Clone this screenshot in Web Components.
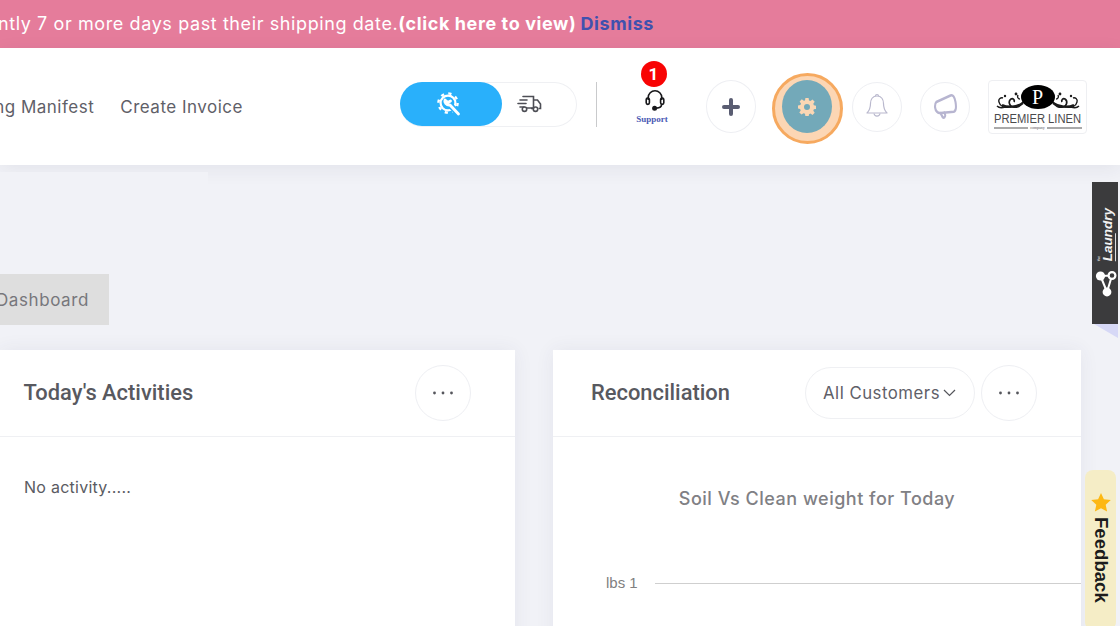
<!DOCTYPE html>
<html>
<head>
<meta charset="utf-8">
<style>
  html, body { margin: 0; height: 100%; }
  body {
    width: 1120px;
    height: 626px;
    overflow: hidden;
    position: relative;
    background: #f1f2f7;
    font-family: "Inter", "Liberation Sans", sans-serif;
  }
</style>
</head>
<body>
<app-banner>
  <span>You have orders that are currently 7 or more days past their shipping date.</span><b>(click here to view)</b>
  <a slot="action">Dismiss</a>
</app-banner>
<app-header>
  <app-nav-link>Receiving Manifest</app-nav-link>
  <app-nav-link>Create Invoice</app-nav-link>
</app-header>
<app-main></app-main>
<app-laundry-tab></app-laundry-tab>
<app-feedback-tab></app-feedback-tab>

<script>
class Banner extends HTMLElement {
  constructor() {
    super();
    this.attachShadow({ mode: "open" });
  }

  connectedCallback() {
    this.shadowRoot.innerHTML = `
      <style>
        :host {
          display: flex;
          justify-content: flex-end;
          align-items: center;
          box-sizing: border-box;
          height: 48px;
          padding: 0 466px 2px 0;
          overflow: hidden;
          background: #e57c9b;
          color: #fff;
          font-size: 18px;
          letter-spacing: 0.6px;
          white-space: nowrap;
        }
        .action {
          flex: none;
          margin-left: 4px;
          color: #3f51ae;
          font-weight: 700;
        }
        .text { flex: none; }
      </style>
      <span class="text"><slot></slot></span>
      <span class="action"><slot name="action"></slot></span>
    `;
  }
}

class NavLink extends HTMLElement {
  constructor() {
    super();
    this.attachShadow({ mode: "open" });
  }

  connectedCallback() {
    this.shadowRoot.innerHTML = `
      <style>
        :host {
          display: block;
          flex: none;
          color: #5f6068;
          font-size: 17px;
          letter-spacing: 0.5px;
          white-space: nowrap;
        }
      </style>
      <slot></slot>
    `;
  }
}

class ModeToggle extends HTMLElement {
  constructor() {
    super();
    this.attachShadow({ mode: "open" });
  }

  connectedCallback() {
    this.shadowRoot.innerHTML = `
      <style>
        :host {
          display: flex;
          flex: none;
          width: 177px;
          height: 45px;
          margin-bottom: 5px;
          box-sizing: border-box;
          border: 1px solid #eff0f3;
          border-left: 0;
          border-radius: 23px;
        }
        .on {
          display: flex;
          align-items: center;
          justify-content: center;
          width: 102px;
          height: 44px;
          margin-top: -1px;
          border-radius: 22px;
          background: #29b0fb;
        }
        .on svg { margin-right: 4px; }
        .off {
          display: flex;
          flex: 1;
          align-items: center;
          justify-content: center;
          padding-right: 20px;
        }
      </style>
      <div class="on">
        <svg width="26" height="26" viewBox="0 0 26 26" fill="none" stroke="#fff">
          <circle cx="12" cy="12" r="9.600" stroke-width="2.400" stroke-dasharray="3.200 4.340"/>
          <circle cx="12" cy="12" r="7.400" stroke-width="2.200"/>
          <path d="M15 15l8 8.500" stroke="#29b0fb" stroke-width="6"/>
          <path d="M9 9c-1 2.500 1.500 5.500 5 5l8.500 9M9 9l3 2.500 2.500-1.500" stroke-width="2.800" stroke-linecap="round" stroke-linejoin="round"/>
        </svg>
      </div>
      <div class="off">
        <svg width="25" height="18" viewBox="0 0 25 18" fill="none" stroke="#4d4e55" stroke-width="1.600">
          <path d="M6 1.500h10.500v11.500H10M3 5h7M1 8.500h8M3 12h4" stroke-linecap="round"/>
          <path d="M16.500 5h4l3 4v4.500h-2M16.500 13.500H14"/>
          <circle cx="7.500" cy="14.200" r="2.200"/>
          <circle cx="18.500" cy="14.200" r="2.200"/>
        </svg>
      </div>
    `;
  }
}

class SupportLink extends HTMLElement {
  constructor() {
    super();
    this.attachShadow({ mode: "open" });
  }

  connectedCallback() {
    this.shadowRoot.innerHTML = `
      <style>
        :host {
          display: flex;
          flex: none;
          flex-direction: column;
          align-items: center;
          width: 60px;
          margin-bottom: 27px;
        }
        .badge {
          display: flex;
          align-items: center;
          justify-content: center;
          width: 26px;
          height: 26px;
          margin-left: 3px;
          border-radius: 50%;
          background: #f80404;
          color: #fff;
          font: 700 17px "Roboto", sans-serif;
        }
        svg { display: block; margin: 3px 0 0 5px; }
        .label {
          margin-top: 2px;
          color: #4a5ab4;
          font: 700 9px/11px "Liberation Serif", serif;
        }
      </style>
      <div class="badge">1</div>
      <svg width="20" height="22" viewBox="0 0 20 22" fill="none" stroke="#17171a" stroke-width="1.600">
        <path d="M3.200 10V7.600a6.800 6.800 0 0 1 13.600 0V10"/>
        <rect x="1.200" y="8" width="3.200" height="6.400" rx="1.600"/>
        <rect x="15.600" y="8" width="3.200" height="6.400" rx="1.600"/>
        <path d="M16.500 14.500c0 2.600-2 3.600-5 3.600"/>
        <circle cx="9.600" cy="18.200" r="1.700" fill="#17171a"/>
      </svg>
      <div class="label">Support</div>
    `;
  }
}

class RoundButton extends HTMLElement {
  constructor() {
    super();
    this.attachShadow({ mode: "open" });
  }

  connectedCallback() {
    const size = this.getAttribute("size") || "50";
    const height = this.getAttribute("height") || size;
    this.shadowRoot.innerHTML = `
      <style>
        :host {
          display: flex;
          flex: none;
          align-items: center;
          justify-content: center;
          box-sizing: border-box;
          width: ${size}px;
          height: ${height}px;
          border: 1px solid #eeeff3;
          border-radius: 50%;
          background: #fff;
        }
        ::slotted(svg) { display: block; }
      </style>
      <slot></slot>
    `;
  }
}

class GearButton extends HTMLElement {
  constructor() {
    super();
    this.attachShadow({ mode: "open" });
  }

  connectedCallback() {
    this.shadowRoot.innerHTML = `
      <style>
        :host {
          display: flex;
          flex: none;
          align-items: center;
          justify-content: center;
          box-sizing: border-box;
          width: 71px;
          height: 71px;
          margin-top: 4px;
          border: 3px solid #f6a95f;
          border-radius: 50%;
          background: #fcd6b4;
        }
        .inner {
          display: flex;
          align-items: center;
          justify-content: center;
          width: 50px;
          height: 53px;
          margin: 0 1px 4px 0;
          border-radius: 50%;
          background: #73a9b9;
        }
      </style>
      <div class="inner">
        <svg width="18" height="18" viewBox="0 0 18 18">
          <path fill="#fbd7b4" fill-rule="evenodd" d="M7.400 0h3.200l.4 2.400 1.500.6 2-1.400 2.200 2.200-1.400 2 .6 1.500 2.400.4v3.200l-2.400.4-.6 1.500 1.400 2-2.200 2.200-2-1.400-1.500.6-.4 2.400H7.400L7 15.800l-1.500-.6-2 1.400-2.200-2.200 1.400-2-.6-1.500L0 10.600V7.400L2.400 7l.6-1.500-1.400-2 2.200-2.200 2 1.400L7 2.400zM9 6a3 3 0 1 0 0 6 3 3 0 0 0 0-6z"/>
        </svg>
      </div>
    `;
  }
}

class CompanyLogo extends HTMLElement {
  constructor() {
    super();
    this.attachShadow({ mode: "open" });
  }

  connectedCallback() {
    const flourish = `
      <path d="M29 17c-2 4-6 6-10 5-4-1-5-6-2-8 2-1 4 1 3 3" stroke-width="1.700"/>
      <path d="M24 10c-1 2 0 4 2 4M15 22c-5 1-9-1-10-5-1-3 2-5 4-4M11 22c-3 1-6 1-8-1" stroke-width="1.400"/>
      <path d="M8 20c6 3 15 2 21-2" stroke-width="2.400"/>
      <circle cx="22" cy="9" r="1.400" fill="#1b1b1b" stroke="none"/>
      <circle cx="11" cy="11" r="1.200" fill="#1b1b1b" stroke="none"/>
    `;
    this.shadowRoot.innerHTML = `
      <style>
        :host {
          display: flex;
          flex: none;
          flex-direction: column;
          align-items: center;
          box-sizing: border-box;
          width: 99px;
          height: 54px;
          padding-top: 4px;
          border: 1px solid #eeeff2;
          border-radius: 4px;
          overflow: hidden;
        }
        .mark { position: relative; width: 88px; height: 27px; }
        svg { display: block; }
        .p {
          position: absolute;
          left: 0;
          right: 0;
          top: 0;
          color: #fff;
          text-align: center;
          font: 20px/24px "Liberation Serif", serif;
        }
        .name {
          color: #4a4a4c;
          font: 11.200px/13px "Liberation Sans", sans-serif;
          transform: scaleY(1.150);
          white-space: nowrap;
        }
        .rule {
          display: flex;
          align-items: center;
          gap: 2px;
          width: 88px;
          margin-top: 1px;
          color: #555;
          font: 4px/4px "Liberation Serif", serif;
        }
        .rule i { flex: 1; height: 2px; background: #a9a9a9; }
      </style>
      <div class="mark">
        <svg width="88" height="27" viewBox="0 0 88 27">
          <g fill="none" stroke="#1b1b1b">${flourish}</g>
          <g fill="none" stroke="#1b1b1b" transform="matrix(-1 0 0 1 88 0)">${flourish}</g>
          <ellipse cx="44" cy="12" rx="17" ry="12" fill="#000"/>
        </svg>
        <div class="p">P</div>
      </div>
      <div class="name">PREMIER LINEN</div>
      <div class="rule"><i></i>company<i></i></div>
    `;
  }
}

class Header extends HTMLElement {
  constructor() {
    super();
    this.attachShadow({ mode: "open" });
  }

  connectedCallback() {
    this.shadowRoot.innerHTML = `
      <style>
        :host {
          display: flex;
          align-items: center;
          position: relative;
          height: 117px;
          background: #fff;
          box-shadow: 0 4px 18px rgba(40, 40, 70, 0.07);
        }
        .nav {
          display: flex;
          flex: none;
          justify-content: flex-end;
          gap: 26px;
          width: 243px;
          overflow: hidden;
        }
        app-mode-toggle { margin-left: 157px; }
        .divider {
          flex: none;
          width: 1px;
          height: 45px;
          margin: 0 0 5px 19px;
          background: #c9cacc;
        }
        app-support-link { margin-left: 25px; }
        .plus { margin-left: 24px; }
        app-gear-button { margin-left: 16px; }
        .bell { margin-left: 9px; }
        .horn { margin-left: 18px; }
        app-company-logo { margin-left: 18px; }
      </style>
      <div class="nav"><slot></slot></div>
      <app-mode-toggle></app-mode-toggle>
      <div class="divider"></div>
      <app-support-link></app-support-link>
      <app-round-button class="plus" size="50" height="53">
        <svg width="18" height="18" viewBox="0 0 18 18"><path d="M9 2v14M2 9h14" stroke="#5a5d72" stroke-width="4" stroke-linecap="round"/></svg>
      </app-round-button>
      <app-gear-button></app-gear-button>
      <app-round-button class="bell" size="50">
        <svg width="24" height="28" viewBox="0 1 24 28" fill="none" stroke="#b9b8cd" stroke-width="1.200" stroke-linejoin="round">
          <path d="M12 4c-4.500 0-6.500 3.500-6.500 7.500 0 5-1.500 7.500-3.500 9.500h20c-2-2-3.500-4.500-3.500-9.500C18.500 7.500 16.500 4 12 4z"/>
          <path d="M10.500 4c0-2 3-2 3 0M9 21.500c.5 3.500 5.500 3.500 6 0"/>
        </svg>
      </app-round-button>
      <app-round-button class="horn" size="50">
        <svg width="25" height="27" viewBox="0 0 30 27" preserveAspectRatio="none" fill="none" stroke="#b7b5d0" stroke-width="2.500" stroke-linejoin="round" stroke-linecap="round">
          <path d="M4 9L21 2.500C24 1.500 26 4 27 9C28 14 28 18 25 18.700L9 20C6 20.500 3 18 2.500 14.500C2.300 12 2.800 10 4 9z"/>
          <path d="M9 20L11.500 24C13 25.500 15.500 24 14.500 21.500L13.500 19.600"/>
        </svg>
      </app-round-button>
      <app-company-logo></app-company-logo>
    `;
  }
}

class Card extends HTMLElement {
  constructor() {
    super();
    this.attachShadow({ mode: "open" });
  }

  connectedCallback() {
    this.shadowRoot.innerHTML = `
      <style>
        :host {
          display: block;
          background: #fff;
          box-shadow: 0 0 18px rgba(60, 60, 100, 0.07);
        }
        .head {
          display: flex;
          align-items: center;
          box-sizing: border-box;
          height: 87px;
          padding: 0 44px 1px var(--title-left, 23.500px);
          border-bottom: 1px solid #eff0f3;
        }
        .title {
          flex: 1;
          color: #58595f;
          font: 500 21.900px "Roboto", sans-serif;
        }
        .tools { display: flex; align-items: center; gap: 6px; }
      </style>
      <div class="head">
        <div class="title">${this.getAttribute("title") || ""}</div>
        <div class="tools">
          <slot name="tools"></slot>
          <app-round-button size="56">
            <svg width="22" height="4" viewBox="0 0 22 4" fill="#55565c"><circle cx="2.500" cy="2" r="1.400"/><circle cx="11" cy="2" r="1.400"/><circle cx="19.500" cy="2" r="1.400"/></svg>
          </app-round-button>
        </div>
      </div>
      <slot></slot>
    `;
  }
}

class SelectPill extends HTMLElement {
  constructor() {
    super();
    this.attachShadow({ mode: "open" });
  }

  connectedCallback() {
    this.shadowRoot.innerHTML = `
      <style>
        :host {
          display: flex;
          align-items: center;
          gap: 3px;
          box-sizing: border-box;
          width: 170px;
          height: 52px;
          padding-left: 17px;
          border: 1px solid #eff0f3;
          border-radius: 26px;
          color: #5f6068;
          font-size: 16.800px;
          letter-spacing: 0.5px;
          white-space: nowrap;
        }
      </style>
      <slot></slot>
      <svg width="13" height="8" viewBox="0 0 13 8" fill="none" stroke="#55565c" stroke-width="1.200"><path d="M1 1l5.500 5.500L12 1"/></svg>
    `;
  }
}

class WeightChart extends HTMLElement {
  constructor() {
    super();
    this.attachShadow({ mode: "open" });
  }

  connectedCallback() {
    this.shadowRoot.innerHTML = `
      <style>
        :host { display: block; padding-top: 49px; }
        .title {
          color: #808084;
          font-size: 18px;
          font-weight: 500;
          letter-spacing: 0.5px;
          line-height: 26px;
          text-align: center;
        }
        .axis {
          display: flex;
          align-items: center;
          gap: 17px;
          margin-top: 61px;
          padding-left: 53px;
        }
        .tick { color: #808080; font: 15px/20px "Liberation Sans", sans-serif; }
        .line { flex: 1; height: 1px; background: #cfcfcf; }
      </style>
      <div class="title">${this.getAttribute("title") || ""}</div>
      <div class="axis">
        <span class="tick">lbs 1</span>
        <span class="line"></span>
      </div>
    `;
  }
}

class Main extends HTMLElement {
  constructor() {
    super();
    this.attachShadow({ mode: "open" });
  }

  connectedCallback() {
    this.shadowRoot.innerHTML = `
      <style>
        :host { display: block; position: relative; }
        .strip { width: 208px; height: 14px; margin-top: 7px; background: #f1f2f7; position: relative; }
        .crumb {
          display: flex;
          justify-content: flex-end;
          align-items: center;
          box-sizing: border-box;
          width: 109px;
          height: 51px;
          margin-top: 88px;
          padding-right: 20px;
          overflow: hidden;
          background: #dedede;
          color: #77777c;
          font-size: 17px;
          letter-spacing: 0.6px;
          white-space: nowrap;
        }
        .crumb span { flex: none; }
        .grid {
          display: grid;
          grid-template-columns: 515px 528px;
          gap: 38px;
          margin-top: 25px;
        }
        .empty {
          margin: 0;
          padding: 38px 24px 0;
          color: #5a5b62;
          font-size: 16px;
          letter-spacing: 0.25px;
          line-height: 24px;
        }
        app-card { height: 300px; }
        .wide { --title-left: 38px; }
      </style>
      <div class="strip"></div>
      <div class="crumb"><span>Dashboard</span></div>
      <div class="grid">
        <app-card title="Today's Activities">
          <p class="empty">No activity.....</p>
        </app-card>
        <app-card class="wide" title="Reconciliation">
          <app-select-pill slot="tools">All Customers</app-select-pill>
          <app-weight-chart title="Soil Vs Clean weight for Today"></app-weight-chart>
        </app-card>
      </div>
    `;
  }
}

class LaundryTab extends HTMLElement {
  constructor() {
    super();
    this.attachShadow({ mode: "open" });
  }

  connectedCallback() {
    this.shadowRoot.innerHTML = `
      <style>
        :host {
          position: absolute;
          top: 182px;
          right: 2px;
          display: flex;
          flex-direction: column;
          align-items: center;
          box-sizing: border-box;
          width: 26px;
          height: 142px;
          padding-top: 26px;
          background: #3b3b3d;
          color: #f2f2f2;
        }
        .word {
          margin-left: 2px;
          writing-mode: vertical-rl;
          transform: rotate(180deg);
          block-size: 20px;
        }
        .word small { display: block; font: 4px/5px "Liberation Sans", sans-serif; }
        .word span { display: block; font: italic 700 13.500px/14px "Liberation Sans", sans-serif; }
        .word i { display: block; inline-size: 28px; block-size: 1px; background: #ddd; }
        svg { display: block; margin: 7px 0 0 2px; }
        .tail {
          position: absolute;
          top: 100%;
          right: 0;
          width: 0;
          height: 0;
          border-top: 14px solid #d6d8f6;
          border-left: 24px solid transparent;
        }
      </style>
      <div class="word"><small>the</small><span>Laundry</span><i></i></div>
      <svg width="22" height="32" viewBox="0 0 22 32" fill="none" stroke="#fff">
        <path d="M5.500 8l11.500-.5L12 24zM5.500 8L12 24" stroke-width="2"/>
        <circle cx="5.500" cy="8" r="4.600" fill="#fff" stroke="none"/>
        <circle cx="17" cy="7.500" r="3.400" fill="#3b3b3d" stroke-width="2.200"/>
        <circle cx="12" cy="24" r="4.400" fill="#fff" stroke="none"/>
      </svg>
      <div class="tail"></div>
    `;
  }
}

class FeedbackTab extends HTMLElement {
  constructor() {
    super();
    this.attachShadow({ mode: "open" });
  }

  connectedCallback() {
    this.shadowRoot.innerHTML = `
      <style>
        :host {
          position: absolute;
          top: 470px;
          right: 4px;
          display: flex;
          flex-direction: column;
          align-items: center;
          box-sizing: border-box;
          width: 31px;
          height: 160px;
          padding-top: 23px;
          border-radius: 8px;
          background: #f5edc6;
        }
        svg { display: block; }
        .word {
          margin-top: 5px;
          writing-mode: vertical-rl;
          color: #1c1c1c;
          font: 700 18.600px/20px "Liberation Sans", sans-serif;
        }
      </style>
      <svg width="20" height="19" viewBox="0 0 20 19"><path fill="#fdb813" d="M10 0l2.900 6.300 6.900.8-5.100 4.700 1.400 6.800L10 15.200l-6.100 3.400 1.400-6.800L.2 7.100l6.900-.8z"/></svg>
      <div class="word">Feedback</div>
    `;
  }
}

customElements.define("app-banner", Banner);
customElements.define("app-nav-link", NavLink);
customElements.define("app-mode-toggle", ModeToggle);
customElements.define("app-support-link", SupportLink);
customElements.define("app-round-button", RoundButton);
customElements.define("app-gear-button", GearButton);
customElements.define("app-company-logo", CompanyLogo);
customElements.define("app-header", Header);
customElements.define("app-card", Card);
customElements.define("app-select-pill", SelectPill);
customElements.define("app-weight-chart", WeightChart);
customElements.define("app-main", Main);
customElements.define("app-laundry-tab", LaundryTab);
customElements.define("app-feedback-tab", FeedbackTab);
</script>
</body>
</html>
